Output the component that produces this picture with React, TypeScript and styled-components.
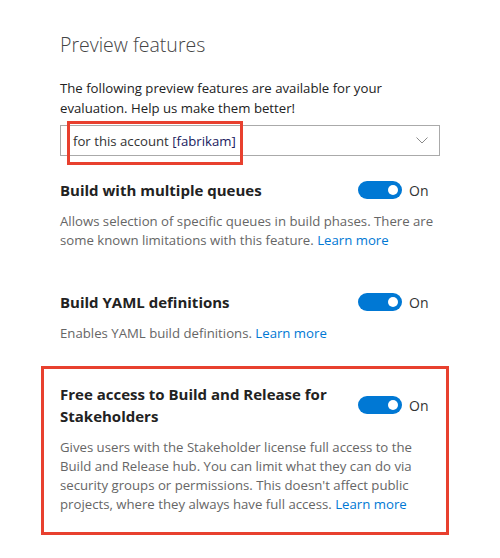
import styled, { createGlobalStyle } from 'styled-components';

const GlobalStyle = createGlobalStyle`
  html, body {
    margin: 0;
    padding: 0;
    background: #ffffff;
  }
  body {
    font-family: 'Open Sans', 'Noto Sans', sans-serif;
    color: #222222;
  }
`;

type Feature = {
  title: string;
  description: string;
  highlighted?: boolean;
};

const features: Feature[] = [
  {
    title: 'Build with multiple queues',
    description:
      'Allows selection of specific queues in build phases. There are some known limitations with this feature.',
  },
  {
    title: 'Build YAML definitions',
    description: 'Enables YAML build definitions.',
  },
  {
    title: 'Free access to Build and Release for Stakeholders',
    description:
      "Gives users with the Stakeholder license full access to the Build and Release hub. You can limit what they can do via security groups or permissions. This doesn't affect public projects, where they always have full access.",
    highlighted: true,
  },
];

const Toggle = ({ on }: { on: boolean }) => (
  <ToggleWrap>
    <Track $on={on}>
      <Knob />
    </Track>
    <ToggleLabel>{on ? 'On' : 'Off'}</ToggleLabel>
  </ToggleWrap>
);

const FeatureItem = ({ feature }: { feature: Feature }) => {
  const body = (
    <>
      <FeatureHeader>
        <FeatureTitle>{feature.title}</FeatureTitle>
        <Toggle on />
      </FeatureHeader>
      <FeatureText>
        {feature.description} <LearnMore href="#">Learn more</LearnMore>
      </FeatureText>
    </>
  );

  if (feature.highlighted) return <Highlight>{body}</Highlight>;
  return <FeatureBlock>{body}</FeatureBlock>;
};

const App = () => {
  return (
    <Page>
      <GlobalStyle />
      <Heading>Preview features</Heading>
      <Intro>The following preview features are available for your evaluation. Help us make them better!</Intro>
      <Select>
        <SelectValue>
          for this account <Scope>[fabrikam]</Scope>
        </SelectValue>
        <svg width="12" height="7" viewBox="0 0 12 7" fill="none">
          <path d="M0.5 0.5 L6 6 L11.5 0.5" stroke="#8a8a8a" strokeWidth="1" />
        </svg>
        <Callout />
      </Select>
      {features.map((feature, index) => (
        <FeatureItem key={index} feature={feature} />
      ))}
    </Page>
  );
};

const Page = styled.div`
  width: 380px;
  padding: 31px 60px 20px 60px;
`;

const Heading = styled.h1`
  margin: 0;
  font-size: 19.5px;
  line-height: 28px;
  font-weight: 300;
  color: #444444;
`;

const Intro = styled.p`
  margin: 19px 0 0 0;
  font-size: 13.2px;
  line-height: 20px;
  color: #222222;
`;

const Select = styled.div`
  position: relative;
  margin-top: 7px;
  height: 29px;
  border: 1px solid #aaaaaa;
  display: flex;
  align-items: center;
  justify-content: space-between;
  padding: 0 11px 0 12px;
`;

const SelectValue = styled.span`
  font-size: 13.2px;
  color: #333333;
`;

const Scope = styled.span`
  color: #20205e;
`;

const Callout = styled.div`
  position: absolute;
  left: 6px;
  top: -5px;
  width: 170px;
  height: 38px;
  border: 3px solid #e8402f;
  pointer-events: none;
`;

const FeatureBlock = styled.section`
  margin-top: 23px;
  & + & {
    margin-top: 41px;
  }
`;

const Highlight = styled.section`
  margin: 23px -9px 0 -19px;
  padding: 14px 6px 18px 16px;
  border: 3px solid #e8402f;
`;

const FeatureHeader = styled.div`
  display: flex;
  align-items: center;
  justify-content: space-between;
  gap: 20px;
`;

const FeatureTitle = styled.h2`
  margin: 0;
  font-size: 15px;
  line-height: 22px;
  font-weight: 700;
  color: #222222;
`;

const FeatureText = styled.p`
  margin: 11px 0 0 0;
  font-size: 13.2px;
  line-height: 19px;
  color: #666666;
`;

const LearnMore = styled.a`
  color: #0078d4;
  text-decoration: none;
`;

const ToggleWrap = styled.div`
  display: flex;
  align-items: center;
  gap: 7px;
  flex-shrink: 0;
  width: 82px;
`;

const Track = styled.div<{ $on: boolean }>`
  width: 44px;
  height: 18px;
  border-radius: 9px;
  background: ${p => (p.$on ? '#0078d4' : '#ffffff')};
  display: flex;
  align-items: center;
  justify-content: ${p => (p.$on ? 'flex-end' : 'flex-start')};
  padding: 0 4px;
  box-sizing: border-box;
`;

const Knob = styled.span`
  width: 10px;
  height: 10px;
  border-radius: 50%;
  background: #ffffff;
`;

const ToggleLabel = styled.span`
  font-size: 14px;
  color: #333333;
`;

export default App;
